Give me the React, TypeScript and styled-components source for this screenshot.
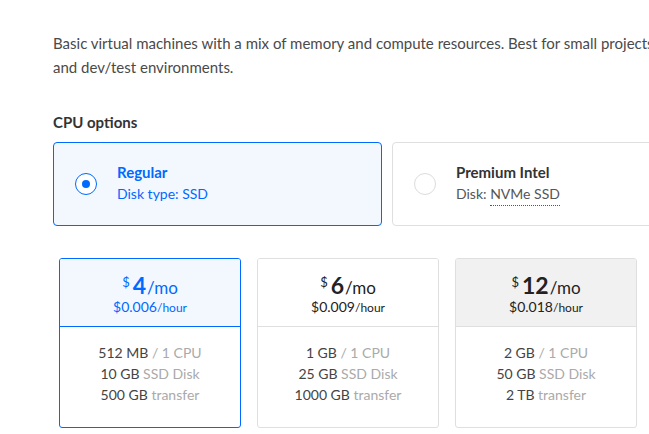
import styled, {createGlobalStyle} from "styled-components";

const GlobalStyle = createGlobalStyle`
  body {
    margin: 0;
    background: #ffffff;
    font-family: "Lato", "Open Sans", sans-serif;
    overflow: hidden;
  }
`;

const plans = [
  {price: "4", hour: "$0.006", mem: "512 MB", disk: "10 GB", transfer: "500 GB", state: "selected"},
  {price: "6", hour: "$0.009", mem: "1 GB", disk: "25 GB", transfer: "1000 GB", state: "idle"},
  {price: "12", hour: "$0.018", mem: "2 GB", disk: "50 GB", transfer: "2 TB", state: "hover"},
] as const;

type CardState = "selected" | "idle" | "hover";

const App = () => {
  return (
    <>
      <GlobalStyle />
      <Page>
        <Description>
          Basic virtual machines with a mix of memory and compute resources. Best for small projects
          <br />
          and dev/test environments.
        </Description>
        <SectionTitle>CPU options</SectionTitle>
        <OptionRow>
          <OptionCard $active>
            <Radio $active />
            <OptionText>
              <OptionName $active>Regular</OptionName>
              <OptionMeta $active>Disk type: SSD</OptionMeta>
            </OptionText>
          </OptionCard>
          <OptionCard>
            <Radio />
            <OptionText>
              <OptionName>Premium Intel</OptionName>
              <OptionMeta>
                Disk: <Dotted>NVMe SSD</Dotted>
              </OptionMeta>
            </OptionText>
          </OptionCard>
        </OptionRow>
        <PlanGrid>
          {plans.map((p) => (
            <PlanCard key={p.price} $state={p.state}>
              <PlanHead $state={p.state}>
                <PriceLine>
                  <Currency>$</Currency>
                  <Amount>{p.price}</Amount>
                  <Per>/mo</Per>
                </PriceLine>
                <HourLine>
                  {p.hour}
                  <small>/hour</small>
                </HourLine>
              </PlanHead>
              <PlanBody>
                <Spec>
                  {p.mem} <Faint>/ 1 CPU</Faint>
                </Spec>
                <Spec>
                  {p.disk} <Faint>SSD Disk</Faint>
                </Spec>
                <Spec>
                  {p.transfer} <Faint>transfer</Faint>
                </Spec>
              </PlanBody>
            </PlanCard>
          ))}
        </PlanGrid>
      </Page>
    </>
  );
};

const Page = styled.main`
  padding: 31px 0 0 53px;
  width: 649px;
  height: 434px;
  box-sizing: border-box;
  overflow: hidden;
`;

const Description = styled.p`
  margin: 0;
  width: 700px;
  font-size: 15px;
  line-height: 24px;
  color: #4a4a4a;
  white-space: nowrap;
`;

const SectionTitle = styled.h3`
  margin: 33px 0 0;
  font-size: 15px;
  line-height: 20px;
  font-weight: 700;
  color: #333333;
`;

const OptionRow = styled.div`
  display: flex;
  gap: 10px;
  margin-top: 10px;
`;

const OptionCard = styled.div<{$active?: boolean}>`
  flex: 0 0 329px;
  height: 84px;
  box-sizing: border-box;
  display: flex;
  align-items: center;
  gap: 20px;
  padding-left: 21px;
  border: 1px solid ${(p) => (p.$active ? "#0069ff" : "#dfdfdf")};
  border-radius: 4px;
  background: ${(p) => (p.$active ? "#f3f8ff" : "#ffffff")};
`;

const Radio = styled.span<{$active?: boolean}>`
  width: 22px;
  height: 22px;
  box-sizing: border-box;
  border-radius: 50%;
  border: 1px solid ${(p) => (p.$active ? "#0069ff" : "#dcdcdc")};
  background: #ffffff;
  position: relative;
  flex-shrink: 0;

  &::after {
    content: "";
    display: ${(p) => (p.$active ? "block" : "none")};
    position: absolute;
    left: 50%;
    top: 50%;
    width: 8px;
    height: 8px;
    margin: -4px 0 0 -4px;
    border-radius: 50%;
    background: #0069ff;
  }
`;

const OptionText = styled.div`
  display: flex;
  flex-direction: column;
  gap: 2px;
  margin-top: -2px;
`;

const OptionName = styled.div<{$active?: boolean}>`
  font-size: 15px;
  line-height: 20px;
  font-weight: 700;
  color: ${(p) => (p.$active ? "#0069ff" : "#333333")};
`;

const OptionMeta = styled.div<{$active?: boolean}>`
  font-size: 14px;
  line-height: 20px;
  color: ${(p) => (p.$active ? "#0069ff" : "#555555")};
`;

const Dotted = styled.span`
  border-bottom: 1px dotted #555555;
  padding-bottom: 3px;
`;

const PlanGrid = styled.div`
  display: flex;
  gap: 16px;
  margin: 32px 0 0 6px;
`;

const PlanCard = styled.div<{$state: CardState}>`
  flex: 0 0 182px;
  height: 170px;
  box-sizing: border-box;
  border: 1px solid ${(p) => (p.$state === "selected" ? "#0069ff" : "#dfdfdf")};
  border-radius: 3px;
  overflow: hidden;
  display: flex;
  flex-direction: column;
`;

const PlanHead = styled.div<{$state: CardState}>`
  height: 68px;
  box-sizing: border-box;
  padding-top: 15px;
  text-align: center;
  border-bottom: 1px solid ${(p) => (p.$state === "selected" ? "#0069ff" : "#dfdfdf")};
  background: ${(p) =>
    p.$state === "selected" ? "#f3f8ff" : p.$state === "hover" ? "#f1f1f1" : "#ffffff"};
  color: ${(p) => (p.$state === "selected" ? "#0069ff" : "#222222")};
`;

const PriceLine = styled.div`
  display: flex;
  justify-content: center;
  align-items: baseline;
  height: 22px;
`;

const Currency = styled.span`
  display: inline-block;
  font-size: 13px;
  align-self: flex-start;
  margin-right: 3px;
  line-height: 16px;
`;

const Amount = styled.span`
  display: inline-block;
  font-size: 23px;
  line-height: 22px;
  font-weight: 700;
`;

const Per = styled.span`
  display: inline-block;
  font-size: 17px;
  line-height: 20px;
  margin-left: 1px;
`;

const HourLine = styled.div`
  margin-top: 3px;
  font-size: 14px;
  line-height: 16px;

  small {
    font-size: 12px;
  }
`;

const PlanBody = styled.div`
  padding-top: 15px;
  text-align: center;
`;

const Spec = styled.div`
  font-size: 14px;
  line-height: 21px;
  color: #444444;
`;

const Faint = styled.span`
  color: #aaaaaa;
`;

export default App;
